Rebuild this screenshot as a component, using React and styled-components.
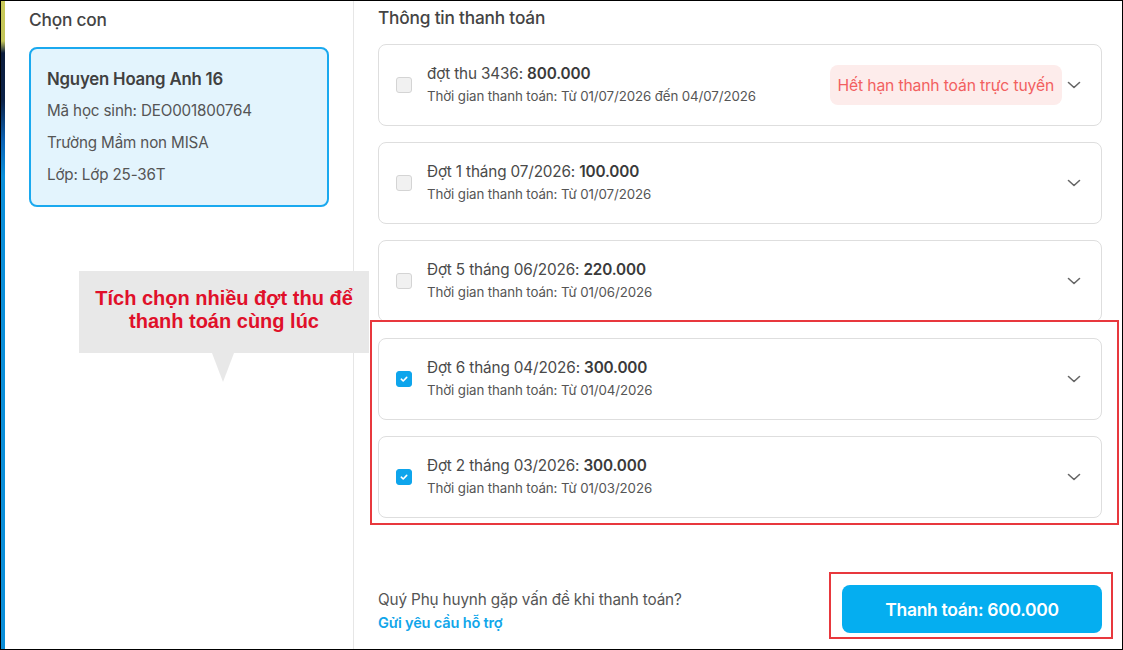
import React from "react";
import styled, { createGlobalStyle } from "styled-components";

const Global = createGlobalStyle`
  html, body { margin: 0; padding: 0; background: #fff; }
  body { font-family: "Inter", "Roboto", sans-serif; color: #3f3f46; }
  * { box-sizing: border-box; }
`;

const Frame = styled.div`
  position: relative;
  width: 1123px;
  height: 650px;
  border: 1px solid #000;
  display: flex;
  overflow: hidden;
  background: #fff;
`;

const Strip = styled.div`
  width: 4px;
  flex: none;
  background: linear-gradient(
    180deg,
    #c9c958 0px,
    #c2c45a 40px,
    #0b1c3c 52px,
    #0b2248 100px,
    #0a62b4 140px,
    #0a8ed8 175px,
    #0a8ed8 100%
  );
`;

const LeftPanel = styled.aside`
  width: 349px;
  flex: none;
  border-right: 1px solid #e6e6e6;
  padding: 7px 24px 0 24px;
`;

const SectionTitle = styled.h2`
  margin: 0;
  font-size: 17.3px;
  line-height: 24px;
  font-weight: 500;
  color: #444;
  letter-spacing: -0.2px;
`;

const ChildCard = styled.div`
  margin-top: 15px;
  width: 300px;
  height: 160px;
  border: 2px solid #1aa9ef;
  border-radius: 8px;
  background: #e3f4fd;
  padding: 18px 16px 0 16px;
`;

const ChildName = styled.div`
  font-size: 16.8px;
  font-weight: 600;
  color: #404040;
  line-height: 24px;
  letter-spacing: -0.2px;
`;

const ChildLine = styled.div`
  margin-top: 8px;
  font-size: 15.2px;
  color: #555;
  line-height: 24px;
  letter-spacing: -0.15px;
`;

const RightPanel = styled.main`
  flex: 1;
  display: flex;
  flex-direction: column;
  padding: 5px 20px 0 24px;
`;

const FeeList = styled.div`
  margin-top: 14px;
  display: flex;
  flex-direction: column;
  gap: 16px;
`;

const FeeCard = styled.div`
  height: 82px;
  border: 1px solid #dedede;
  border-radius: 8px;
  display: flex;
  align-items: center;
  padding: 0 12px 0 17px;
`;

const Box = styled.span`
  width: 16px;
  height: 16px;
  flex: none;
  border-radius: 3px;
  border: 1px solid ${(p) => (p.$on ? "#0ea5ec" : "#d4d4d4")};
  background: ${(p) => (p.$on ? "#0ea5ec" : "#f1f1f1")};
  display: flex;
  align-items: center;
  justify-content: center;
`;

const FeeText = styled.div`
  margin-left: 15px;
  flex: 1;
  display: flex;
  flex-direction: column;
  gap: 2px;
  padding-bottom: 2px;
`;

const FeeTitle = styled.div`
  font-size: 15.3px;
  line-height: 22px;
  color: #4a4a4a;
  letter-spacing: -0.15px;
  b { font-weight: 600; color: #3a3a3a; }
`;

const FeeSub = styled.div`
  font-size: 13.3px;
  line-height: 18px;
  color: #555;
  letter-spacing: -0.1px;
`;

const Badge = styled.span`
  height: 40px;
  padding: 0 8px;
  border-radius: 8px;
  background: #fdeceb;
  color: #f25f5f;
  font-size: 15.7px;
  display: flex;
  align-items: center;
  letter-spacing: -0.15px;
`;

const Chevron = styled.svg`
  width: 16px;
  height: 16px;
  margin-left: 4px;
  margin-right: 7px;
  flex: none;
`;

const Footer = styled.div`
  margin-top: auto;
  height: 64px;
  margin-bottom: 8px;
  display: flex;
  align-items: center;
  justify-content: space-between;
`;

const Help = styled.div`
  display: flex;
  flex-direction: column;
  padding-top: 4px;
`;

const HelpText = styled.div`
  font-size: 15.3px;
  line-height: 24px;
  color: #555;
  letter-spacing: -0.15px;
`;

const HelpLink = styled.a`
  font-size: 14.6px;
  line-height: 22px;
  font-weight: 600;
  color: #11a6ea;
  text-decoration: none;
  letter-spacing: -0.2px;
`;

const PayButton = styled.button`
  width: 260px;
  height: 48px;
  border: none;
  border-radius: 8px;
  background: #05aef0;
  color: #fff;
  font-family: inherit;
  font-size: 17.5px;
  font-weight: 600;
  letter-spacing: -0.3px;
`;

const Callout = styled.div`
  position: absolute;
  left: 78px;
  top: 270px;
  width: 290px;
  height: 82px;
  background: #e8e8e8;
  display: flex;
  align-items: center;
  justify-content: center;
  text-align: center;
  font-family: "Liberation Sans", Arial, sans-serif;
  font-weight: 700;
  font-size: 20px;
  line-height: 23px;
  color: #e0102a;
  padding-bottom: 4px;

  &::after {
    content: "";
    position: absolute;
    left: 133px;
    top: 82px;
    border-left: 11px solid transparent;
    border-right: 11px solid transparent;
    border-top: 29px solid #e8e8e8;
  }
`;

const Mark = styled.div`
  position: absolute;
  border: 2px solid #e8383d;
  left: ${(p) => p.$x}px;
  top: ${(p) => p.$y}px;
  width: ${(p) => p.$w}px;
  height: ${(p) => p.$h}px;
`;

const fees = [
  { name: "đợt thu 3436", amount: "800.000", time: "Từ 01/07/2026 đến 04/07/2026", expired: true },
  { name: "Đợt 1 tháng 07/2026", amount: "100.000", time: "Từ 01/07/2026" },
  { name: "Đợt 5 tháng 06/2026", amount: "220.000", time: "Từ 01/06/2026" },
  { name: "Đợt 6 tháng 04/2026", amount: "300.000", time: "Từ 01/04/2026", checked: true },
  { name: "Đợt 2 tháng 03/2026", amount: "300.000", time: "Từ 01/03/2026", checked: true },
];

function Check() {
  return (
    <svg width="10" height="10" viewBox="0 0 10 10">
      <path d="M2.3 5.2 L4.2 7 L7.7 3.4" fill="none" stroke="#fff" strokeWidth="1.6" strokeLinecap="round" strokeLinejoin="round" />
    </svg>
  );
}

export default function App() {
  return (
    <>
      <Global />
      <Frame>
        <Strip />
        <LeftPanel>
          <SectionTitle>Chọn con</SectionTitle>
          <ChildCard>
            <ChildName>Nguyen Hoang Anh 16</ChildName>
            <ChildLine>Mã học sinh: DEO001800764</ChildLine>
            <ChildLine>Trường Mầm non MISA</ChildLine>
            <ChildLine>Lớp: Lớp 25-36T</ChildLine>
          </ChildCard>
        </LeftPanel>
        <RightPanel>
          <SectionTitle>Thông tin thanh toán</SectionTitle>
          <FeeList>
            {fees.map((f) => (
              <FeeCard key={f.name}>
                <Box $on={f.checked}>{f.checked && <Check />}</Box>
                <FeeText>
                  <FeeTitle>
                    {f.name}: <b>{f.amount}</b>
                  </FeeTitle>
                  <FeeSub>Thời gian thanh toán: {f.time}</FeeSub>
                </FeeText>
                {f.expired && <Badge>Hết hạn thanh toán trực tuyến</Badge>}
                <Chevron viewBox="0 0 16 16">
                  <path d="M2.5 5.5 L8 10.5 L13.5 5.5" fill="none" stroke="#666" strokeWidth="1.6" strokeLinecap="round" strokeLinejoin="round" />
                </Chevron>
              </FeeCard>
            ))}
          </FeeList>
          <Footer>
            <Help>
              <HelpText>Quý Phụ huynh gặp vấn đề khi thanh toán?</HelpText>
              <HelpLink href="#">Gửi yêu cầu hỗ trợ</HelpLink>
            </Help>
            <PayButton>Thanh toán: 600.000</PayButton>
          </Footer>
        </RightPanel>
        <Callout>
          Tích chọn nhiều đợt thu để
          <br />
          thanh toán cùng lúc
        </Callout>
        <Mark $x={369} $y={319} $w={749} $h={205} />
        <Mark $x={828} $y={571} $w={284} $h={67} />
      </Frame>
    </>
  );
}
